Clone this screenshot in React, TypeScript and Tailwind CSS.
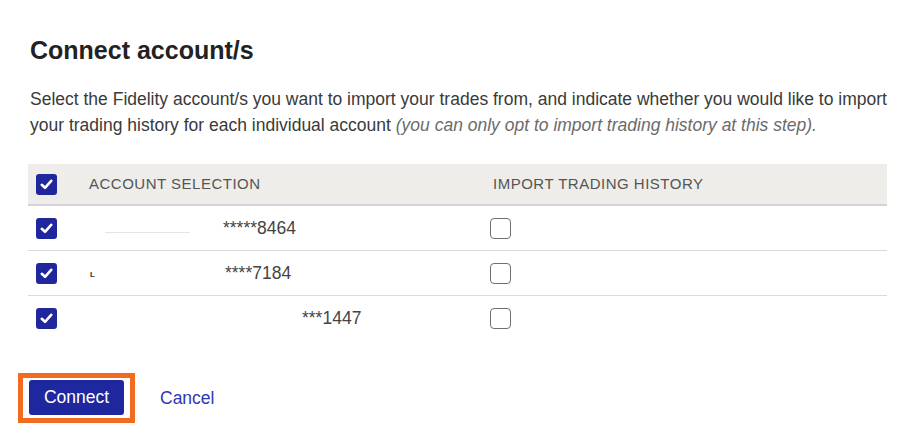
import { useState } from "react";

type Account = {
  id: string;
  prefix: React.ReactNode;
  masked: string;
  maskedOffset: string;
};

const accounts: Account[] = [
  {
    id: "8464",
    prefix: <span className="block h-px w-[85px] bg-[#e4e4e4] ml-[16px] mt-[8px]" />,
    masked: "*****8464",
    maskedOffset: "w-[134px]",
  },
  {
    id: "7184",
    prefix: <span className="text-[8px] font-bold text-[#333] mt-[3px] ml-[1px]">L</span>,
    masked: "****7184",
    maskedOffset: "w-[136px]",
  },
  {
    id: "1447",
    prefix: null,
    masked: "***1447",
    maskedOffset: "w-[213px]",
  },
];

function Box({ checked, onClick }: { checked: boolean; onClick: () => void }) {
  if (checked) {
    return (
      <button
        onClick={onClick}
        className="w-[21px] h-[21px] rounded-[3px] bg-[#20279c] flex items-center justify-center"
      >
        <svg width="13" height="11" viewBox="0 0 13 11" fill="none">
          <path d="M1.8 5.8 L5 8.8 L11.2 1.8" stroke="white" strokeWidth="2.6" strokeLinecap="round" strokeLinejoin="round" />
        </svg>
      </button>
    );
  }
  return (
    <button
      onClick={onClick}
      className="w-[21px] h-[21px] rounded-[4px] border-[1.5px] border-[#707070] bg-white"
    />
  );
}

export default function App() {
  const [selected, setSelected] = useState<boolean[]>([true, true, true]);
  const [history, setHistory] = useState<boolean[]>([false, false, false]);
  const allSelected = selected.every(Boolean);

  return (
    <div className="w-[917px] h-[444px] bg-white font-['Liberation_Sans',Arial,sans-serif] text-[#333] pl-[30px] pt-[36px]">
      <h1 className="text-[25px] font-bold leading-[28px] text-[#222]">Connect account/s</h1>
      <p className="mt-[22px] text-[17.5px] leading-[26px] text-[#3a3a3a] w-[870px]">
        Select the Fidelity account/s you want to import your trades from, and indicate whether you would like to import your trading history for each individual account{" "}
        <span className="italic text-[#6b6b6b]">(you can only opt to import trading history at this step).</span>
      </p>

      <div className="mt-[26px] -ml-[2px] w-[859px]">
        <div className="flex items-center h-[42px] bg-[#eeedea] border-b-[2px] border-[#d4d4d8]">
          <div className="w-[61px] pl-[8px] flex items-center">
            <Box checked={allSelected} onClick={() => setSelected(selected.map(() => !allSelected))} />
          </div>
          <div className="w-[404px] text-[15px] text-[#555] tracking-[0.5px]">ACCOUNT SELECTION</div>
          <div className="text-[15px] text-[#555] tracking-[0.5px]">IMPORT TRADING HISTORY</div>
        </div>
        {accounts.map((a, i) => (
          <div
            key={a.id}
            className={`flex items-center h-[45px] ${i < accounts.length - 1 ? "border-b border-[#d9d9de]" : ""}`}
          >
            <div className="w-[61px] pl-[8px] flex items-center">
              <Box checked={selected[i]} onClick={() => setSelected(selected.map((v, j) => (j === i ? !v : v)))} />
            </div>
            <div className="w-[401px] flex items-center text-[17.5px] text-[#444]">
              <span className={`${a.maskedOffset} flex items-center`}>{a.prefix}</span>
              <span>{a.masked}</span>
            </div>
            <div className="flex items-center">
              <Box checked={history[i]} onClick={() => setHistory(history.map((v, j) => (j === i ? !v : v)))} />
            </div>
          </div>
        ))}
      </div>

      <div className="mt-[32px] -ml-[12px] flex items-center">
        <div className="border-[5px] border-[#f26b1f] px-[6px] pt-[2px] pb-[3px]">
          <button className="w-[95px] h-[35px] rounded-[3px] bg-[#1f279e] text-white text-[17.5px]">Connect</button>
        </div>
        <button className="ml-[25px] text-[17.5px] text-[#2e38b3]">Cancel</button>
      </div>
    </div>
  );
}
